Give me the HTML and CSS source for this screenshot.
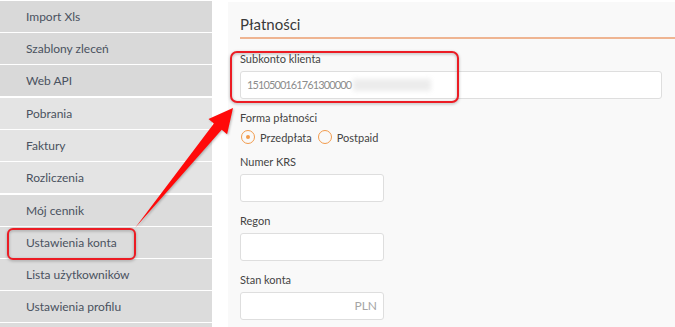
FILE: index.html
```html
<!DOCTYPE html>
<html>
  <head>
    <meta name="viewport" content="width=device-width, initial-scale=1.0" />
    <title>Ustawienia konta</title>
    <link rel="stylesheet" href="styles.css">
  </head>
  <body>
    <div class="page">
      <nav class="sidebar">
        <ul class="menu-group">
          <li>Import Xls</li>
          <li>Szablony zleceń</li>
          <li>Web API</li>
        </ul>
        <ul class="menu-group light">
          <li>Pobrania</li>
          <li>Faktury</li>
          <li>Rozliczenia</li>
        </ul>
        <ul class="menu-group mid">
          <li>Mój cennik</li>
          <li>Ustawienia konta</li>
          <li>Lista użytkowników</li>
          <li>Ustawienia profilu</li>
          <li></li>
        </ul>
      </nav>

      <section class="panel">
        <h2 class="panel-title">Płatności</h2>

        <div class="field">
          <label>Subkonto klienta</label>
          <div class="input wide"><span class="account-no">1510500161761300000</span><span class="blurred"></span></div>
        </div>

        <div class="field">
          <label>Forma płatności</label>
          <div class="radios">
            <span class="radio checked"></span>
            <span class="radio-label">Przedpłata</span>
            <span class="radio"></span>
            <span class="radio-label">Postpaid</span>
          </div>
        </div>

        <div class="field tight">
          <label>Numer KRS</label>
          <div class="input"></div>
        </div>

        <div class="field">
          <label>Regon</label>
          <div class="input"></div>
        </div>

        <div class="field">
          <label>Stan konta</label>
          <div class="input suffix">PLN</div>
        </div>
      </section>

      <!-- annotation layer drawn over the screenshot -->
      <svg class="annotations" width="675" height="327" viewBox="0 0 675 327">
        <rect x="231" y="52" width="227" height="50" rx="6" />
        <rect x="8" y="229" width="127" height="30" rx="5" />
        <polygon class="arrow" points="135,228 213.9,123.4 208.5,119 233,108 227.1,134.2 221.7,129.8" />
      </svg>
    </div>
  </body>
</html>
```

FILE: styles.css
```css
* {
margin: 0;
padding: 0;
box-sizing: border-box;
}
body {
background: #fff;
font-family: Lato, "Open Sans", sans-serif;
overflow: hidden;
}
.page {
position: relative;
display: flex;
width: 675px;
height: 327px;
overflow: hidden;
}

/* sidebar */
.sidebar {
width: 212px;
padding-top: 1px;
flex-shrink: 0;
}
.menu-group {
list-style: none;
margin-bottom: 2px;
}
.menu-group li {
height: 31px;
line-height: 31px;
margin-bottom: 1px;
padding-left: 26px;
font-size: 12px;
color: #4a5260;
background: #d9d9d9;
}
.menu-group.light li {
background: #e4e4e4;
}
.menu-group.mid li {
background: #dcdcdc;
}

/* panel */
.panel {
flex: 1;
margin-left: 16px;
margin-top: 2px;
padding-left: 12px;
background: #f9f9f9;
}
.panel-title {
padding-top: 12px;
padding-bottom: 3px;
font-size: 15px;
line-height: 20px;
font-weight: normal;
color: #3a3a3a;
border-bottom: 2px solid #efb592;
}
.field {
margin-top: 12px;
padding-right: 13px;
}
.panel-title + .field {
margin-top: 13px;
}
.field.tight {
margin-top: 11px;
}
.field label {
display: block;
font-size: 11px;
line-height: 13px;
color: #444;
margin-bottom: 6px;
}
.input {
width: 144px;
height: 28px;
line-height: 26px;
padding: 0 6px;
font-size: 12px;
color: #8c8c8c;
background: #fff;
border: 1px solid #dedede;
border-radius: 3px;
}
.input.wide {
width: 100%;
}
.input.suffix {
text-align: right;
color: #a5a5a5;
}
.account-no {
font-size: 11px;
letter-spacing: -0.9px;
}
.blurred {
display: inline-block;
width: 78px;
height: 12px;
margin-left: 2px;
vertical-align: -2px;
background: #ececec;
filter: blur(2.5px);
}

/* radios */
.radios {
display: flex;
align-items: center;
height: 14px;
padding-left: 1px;
}
.radio {
width: 14px;
height: 14px;
border: 1.5px solid #f29b4c;
border-radius: 50%;
display: flex;
align-items: center;
justify-content: center;
}
.radio.checked::after {
content: "";
width: 4px;
height: 4px;
border-radius: 50%;
background: #f29b4c;
}
.radio-label {
font-size: 11px;
color: #444;
margin-left: 5px;
margin-right: 6px;
}

/* annotations */
.annotations {
position: absolute;
left: 0;
top: 0;
pointer-events: none;
}
.annotations rect {
fill: none;
stroke: #ec1c24;
stroke-width: 2;
filter: drop-shadow(0 1px 1.5px rgba(0, 0, 0, 0.3));
}
.annotations .arrow {
fill: #ff0a0a;
filter: drop-shadow(1px 1px 1px rgba(0, 0, 0, 0.25));
}
```
